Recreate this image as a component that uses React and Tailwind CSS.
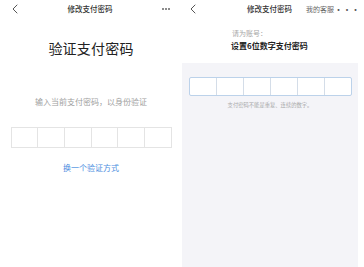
import React from 'react';

const cells = [0, 1, 2, 3, 4, 5];

const Chevron = ({ className = '' }) => (
  <svg className={`shrink-0 ${className}`} width="6" height="10" viewBox="0 0 6 10" fill="none">
    <path d="M5 1L1 5l4 4" stroke="#555" strokeWidth="1" strokeLinecap="round" strokeLinejoin="round" />
  </svg>
);

const Dots = ({ className = '' }) => (
  <div className={`flex shrink-0 gap-[1px] ${className}`}>
    <span className="w-[2px] h-[2px] rounded-full bg-[#666]" />
    <span className="w-[2px] h-[2px] rounded-full bg-[#666]" />
    <span className="w-[2px] h-[2px] rounded-full bg-[#666]" />
  </div>
);

const App = () => {
  return (
    <div
      className="flex w-[364px] h-[267px] bg-white overflow-hidden"
      style={{ fontFamily: '"Noto Sans CJK SC", "Noto Sans", sans-serif' }}
    >
      {/* 左侧：验证支付密码 */}
      <div className="w-[182px] shrink-0 flex flex-col items-center">
        <div className="w-full h-[18px] flex items-center justify-between pl-[12px] pr-[12px]">
          <Chevron />
          <span className="text-[7.5px] leading-none text-[#333] font-medium">修改支付密码</span>
          <Dots />
        </div>
        <div className="mt-[23px] text-[14px] leading-[14px] text-[#222] tracking-[0.2px]">验证支付密码</div>
        <div className="mt-[43px] text-[8px] leading-[8px] text-[#a0a0a0]">输入当前支付密码，以身份验证</div>
        <div className="mt-[21px] w-[161px] h-[21px] flex border border-[#e4e4e4]">
          {cells.map((i) => (
            <div key={i} className={`flex-1 ${i > 0 ? 'border-l border-[#e4e4e4]' : ''}`} />
          ))}
        </div>
        <div className="mt-[16px] text-[8px] leading-[8px] text-[#4a8de0]">换一个验证方式</div>
      </div>

      {/* 右侧：设置支付密码 */}
      <div className="w-[176px] shrink-0 flex flex-col">
        <div className="h-[18px] flex items-center justify-between pl-[8px] pr-[8px]">
          <Chevron />
          <span className="ml-[51px] text-[7.5px] leading-none text-[#333] font-medium whitespace-nowrap">修改支付密码</span>
          <span className="ml-[14px] text-[7px] leading-none text-[#666] whitespace-nowrap">我的客服</span>
          <span className="text-[9px] leading-none text-[#555] tracking-[-0.5px]">···</span>
        </div>
        <div className="pl-[50px] mt-[12px] text-[7px] leading-[7px] text-[#a8a8a8]">请为账号：</div>
        <div className="pl-[49px] mt-[5px] text-[8px] leading-[8px] text-[#222] font-bold">设置6位数字支付密码</div>
        <div className="mt-[13px] flex-1 bg-[#f4f4f8] flex flex-col items-center pt-[14px]">
          <div className="w-[163px] h-[19px] flex bg-white border border-[#bcd2ea] rounded-[2px]">
            {cells.map((i) => (
              <div key={i} className={`flex-1 ${i > 0 ? 'border-l border-[#d4dde8]' : ''}`} />
            ))}
          </div>
          <div className="mt-[6px] text-[5.3px] leading-[6px] text-[#a8a8a8]">支付密码不能是重复、连续的数字。</div>
        </div>
      </div>
      <div className="flex-1" />
    </div>
  );
};

export default App;
